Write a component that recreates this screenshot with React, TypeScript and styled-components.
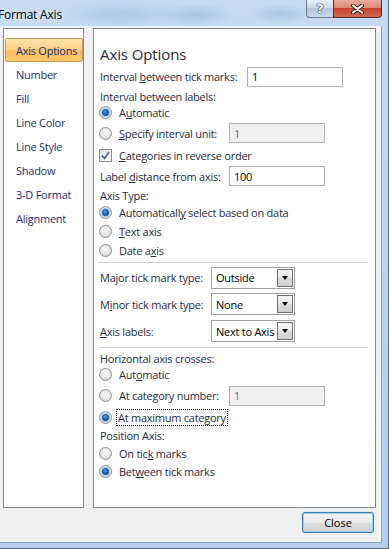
import React from 'react';
import styled, { createGlobalStyle } from 'styled-components';

const GlobalStyle = createGlobalStyle`
  html, body {
    margin: 0;
    padding: 0;
    background: #b7cfe9;
  }
  body {
    font-family: 'Open Sans', 'Liberation Sans', sans-serif;
    font-size: 11px;
    letter-spacing: -0.25px;
    color: #1f2a44;
  }
  * {
    box-sizing: border-box;
  }
`;

const Window = styled.div`
  width: 389px;
  height: 549px;
  display: flex;
  flex-direction: column;
  overflow: hidden;
  border-right: 1px solid #56697f;
  border-bottom: 1px solid #56697f;
  background:
    radial-gradient(ellipse 60px 14px at 120px 14px, rgba(150, 185, 220, 0.55), transparent),
    radial-gradient(ellipse 40px 12px at 195px 15px, rgba(140, 175, 215, 0.5), transparent),
    radial-gradient(ellipse 30px 10px at 280px 14px, rgba(140, 175, 215, 0.5), transparent),
    linear-gradient(180deg, #c6dbf1 0%, #bcd4ed 50%, #b5cee9 100%);
`;

const TitleBar = styled.div`
  height: 26px;
  flex: none;
  display: flex;
  align-items: flex-start;
  padding-right: 6px;
`;

const Title = styled.div`
  flex: 1;
  margin-left: -2px;
  padding-top: 6px;
  font-size: 12px;
  letter-spacing: -0.2px;
  color: #000;
  text-shadow: 0 0 6px rgba(255, 255, 255, 0.9);
`;

const CaptionButtons = styled.div`
  display: flex;
  height: 18px;
`;

const HelpButton = styled.div`
  width: 27px;
  height: 18px;
  border: 1px solid #6c7d91;
  border-top: none;
  border-right: none;
  border-bottom-left-radius: 4px;
  background: linear-gradient(180deg, #e6eef7 0%, #ccdae8 45%, #b4c6da 50%, #c7d7e6 100%);
  display: flex;
  align-items: center;
  justify-content: center;
  font: bold 13px 'DejaVu Sans', sans-serif;
  color: #f4f6f8;
  text-shadow: 0 0 1px #2b3440, 0 0 1px #2b3440, 0 0 1px #2b3440;
`;

const CloseCaption = styled.div`
  width: 49px;
  height: 18px;
  border: 1px solid #5a2b22;
  border-top: none;
  border-bottom-right-radius: 4px;
  background: linear-gradient(180deg, #e8aa9c 0%, #dc8a76 45%, #c7432e 50%, #cf6a4e 100%);
  display: flex;
  align-items: center;
  justify-content: center;
`;

const Client = styled.div`
  flex: 1;
  margin: 0 6px 5px 0;
  border-right: 1px solid #8aa0b8;
  border-bottom: 1px solid #8aa0b8;
  background: #f0f0f0;
  display: flex;
  flex-direction: column;
  padding: 2px 5px 0 3px;
`;

const Panes = styled.div`
  height: 480px;
  display: flex;
  gap: 9px;
`;

const Nav = styled.ul`
  width: 81px;
  margin: 0;
  padding: 9px 0 0 1px;
  list-style: none;
  background: #fff;
  border: 1px solid #828790;
`;

const NavItem = styled.li<{ $active?: boolean }>`
  height: 24px;
  display: flex;
  align-items: center;
  padding-left: ${(p) => (p.$active ? '10px' : '11px')};
  color: #1b2d78;
  border: ${(p) => (p.$active ? '1px solid #c8985a' : 'none')};
  border-radius: 2px;
  background: ${(p) =>
    p.$active
      ? 'radial-gradient(ellipse 60% 70% at 50% 100%, #ffc35e, transparent), linear-gradient(180deg, #fde3a8 0%, #fcd08a 45%, #fbbd62 55%, #fcca78 100%)'
      : 'transparent'};
`;

const Pane = styled.div`
  flex: 1;
  background: #fff;
  border: 1px solid #828790;
  padding: 13px 7px 0 5px;
  display: flex;
  flex-direction: column;
`;

const Heading = styled.div`
  height: 23px;
  display: flex;
  align-items: center;
  font-size: 15px;
  letter-spacing: -0.1px;
  padding-left: 1px;
`;

const Row = styled.div<{ $h: number }>`
  height: ${(p) => p.$h}px;
  flex: none;
  display: flex;
  align-items: center;
`;

const Label = styled.span<{ $w?: number }>`
  white-space: nowrap;
  padding-left: 1px;
  ${(p) => (p.$w ? `width: ${p.$w}px; flex: none;` : '')}
`;

const Key = styled.u`
  text-underline-offset: 1px;
`;

const Choice = styled.span<{ $w?: number }>`
  display: flex;
  align-items: center;
  gap: 7px;
  white-space: nowrap;
  ${(p) => (p.$w ? `width: ${p.$w}px; flex: none;` : '')}
`;

const RadioDot = styled.span<{ $on?: boolean }>`
  width: 13px;
  height: 13px;
  flex: none;
  border-radius: 50%;
  border: 1px solid #8e8f8f;
  background: radial-gradient(circle at 50% 40%, #fafafa 0%, #e4e4e4 55%, #cfcfcf 100%);
  display: flex;
  align-items: center;
  justify-content: center;

  &::after {
    content: '';
    display: ${(p) => (p.$on ? 'block' : 'none')};
    width: 7px;
    height: 7px;
    border-radius: 50%;
    background: radial-gradient(circle at 45% 40%, #59a3e8 0%, #1a63a8 45%, #0c3e72 100%);
    box-shadow: 0 0 1px 1px #9cc4ea;
  }
`;

const CheckBox = styled.span`
  width: 13px;
  height: 13px;
  flex: none;
  border: 1px solid #8e8f8f;
  background: linear-gradient(135deg, #d8d8d8 0%, #f2f2f2 60%, #ffffff 100%);
  display: flex;
  align-items: center;
  justify-content: center;
`;

const TextBox = styled.span<{ $disabled?: boolean }>`
  width: 96px;
  height: 20px;
  flex: none;
  display: flex;
  align-items: center;
  padding-left: 4px;
  border: 1px solid ${(p) => (p.$disabled ? '#adb2b5' : '#abadb3')};
  background: ${(p) => (p.$disabled ? '#f0f0f0' : '#fff')};
  color: ${(p) => (p.$disabled ? '#6d6d6d' : '#000')};
`;

const Combo = styled.span`
  width: 84px;
  height: 22px;
  flex: none;
  display: flex;
  align-items: center;
  border: 1px solid #a0a0a0;
  background: #fff;
  padding: 1px;
`;

const ComboValue = styled.span`
  flex: 1;
  padding-left: 3px;
  color: #000;
  white-space: nowrap;
  overflow: hidden;
`;

const ComboButton = styled.span`
  width: 16px;
  height: 100%;
  flex: none;
  border: 1px solid #707070;
  background: linear-gradient(180deg, #f4f4f4 0%, #ebebeb 50%, #dcdcdc 51%, #d0d0d0 100%);
  display: flex;
  align-items: center;
  justify-content: center;

  &::after {
    content: '';
    width: 0;
    height: 0;
    border-left: 3.5px solid transparent;
    border-right: 3.5px solid transparent;
    border-top: 4px solid #000;
  }
`;

const Separator = styled.div`
  height: 1px;
  flex: none;
  margin: 3px 0 2px -1px;
  background: #d3d3d3;
`;

const Focused = styled.span`
  border: 1px dotted #000;
  padding: 0 1px;
  margin-left: -3px;
  line-height: 15px;
`;

const Footer = styled.div`
  display: flex;
  justify-content: flex-end;
  padding: 4px 2px 0 0;
`;

const Button = styled.button`
  width: 72px;
  height: 21px;
  font: inherit;
  color: #000;
  border: 1px solid #3c7fb1;
  border-radius: 3px;
  background: linear-gradient(180deg, #f2f2f2 0%, #ebebeb 50%, #dddddd 51%, #cfcfcf 100%);
  box-shadow: inset 0 0 0 1px #8fd1f5, 0 0 1px #5fb4e6;
  padding: 0;
`;

const navItems = ['Number', 'Fill', 'Line Color', 'Line Style', 'Shadow', '3-D Format', 'Alignment'];

function Radio({ on, children, w }: { on?: boolean; children: React.ReactNode; w?: number }) {
  return (
    <Choice $w={w}>
      <RadioDot $on={on} />
      <span>{children}</span>
    </Choice>
  );
}

function Dropdown({ value }: { value: string }) {
  return (
    <Combo>
      <ComboValue>{value}</ComboValue>
      <ComboButton />
    </Combo>
  );
}

export default function App() {
  return (
    <>
      <GlobalStyle />
      <Window>
        <TitleBar>
          <Title>Format Axis</Title>
          <CaptionButtons>
            <HelpButton>?</HelpButton>
            <CloseCaption>
              <svg width="13" height="10" viewBox="0 0 13 10">
                <path d="M2 1.5 L11 8.5 M11 1.5 L2 8.5" stroke="#3a1a14" strokeWidth="4" strokeLinecap="round" />
                <path d="M2 1.5 L11 8.5 M11 1.5 L2 8.5" stroke="#fff" strokeWidth="2.2" strokeLinecap="round" />
              </svg>
            </CloseCaption>
          </CaptionButtons>
        </TitleBar>
        <Client>
          <Panes>
            <Nav>
              <NavItem $active>Axis Options</NavItem>
              {navItems.map((n) => (
                <NavItem key={n}>{n}</NavItem>
              ))}
            </Nav>
            <Pane>
              <Heading>Axis Options</Heading>
              <Row $h={23}>
                <Label $w={148}>
                  Interval <Key>b</Key>etween tick marks:
                </Label>
                <TextBox>1</TextBox>
              </Row>
              <Row $h={16}>
                <Label>Interval between labels:</Label>
              </Row>
              <Row $h={16}>
                <Radio on>
                  A<Key>u</Key>tomatic
                </Radio>
              </Row>
              <Row $h={26}>
                <Radio w={130}>
                  <Key>S</Key>pecify interval unit:
                </Radio>
                <TextBox $disabled>1</TextBox>
              </Row>
              <Row $h={19}>
                <Choice>
                  <CheckBox>
                    <svg width="9" height="9" viewBox="0 0 9 9">
                      <path d="M1 4.5 L3.5 7.5 L8 1" fill="none" stroke="#4a5e94" strokeWidth="1.6" />
                    </svg>
                  </CheckBox>
                  <span>
                    <Key>C</Key>ategories in reverse order
                  </span>
                </Choice>
              </Row>
              <Row $h={22}>
                <Label $w={130}>
                  Label <Key>d</Key>istance from axis:
                </Label>
                <TextBox>100</TextBox>
              </Row>
              <Row $h={16}>
                <Label>Axis Type:</Label>
              </Row>
              <Row $h={18}>
                <Radio on>
                  Automaticall<Key>y</Key> select based on data
                </Radio>
              </Row>
              <Row $h={20}>
                <Radio>
                  <Key>T</Key>ext axis
                </Radio>
              </Row>
              <Row $h={18}>
                <Radio>
                  Date a<Key>x</Key>is
                </Radio>
              </Row>
              <Separator />
              <Row $h={25}>
                <Label $w={112}>
                  Ma<Key>j</Key>or tick mark type:
                </Label>
                <Dropdown value="Outside" />
              </Row>
              <Row $h={28}>
                <Label $w={112}>
                  M<Key>i</Key>nor tick mark type:
                </Label>
                <Dropdown value="None" />
              </Row>
              <Row $h={26}>
                <Label $w={112}>
                  <Key>A</Key>xis labels:
                </Label>
                <Dropdown value="Next to Axis" />
              </Row>
              <Separator />
              <Row $h={16}>
                <Label>Horizontal axis crosses:</Label>
              </Row>
              <Row $h={16}>
                <Radio>
                  Aut<Key>o</Key>matic
                </Radio>
              </Row>
              <Row $h={27}>
                <Radio w={130}>
                  At cate<Key>g</Key>ory number:
                </Radio>
                <TextBox $disabled>1</TextBox>
              </Row>
              <Row $h={16}>
                <Radio on>
                  <Focused>
                    At maximum cate<Key>g</Key>ory
                  </Focused>
                </Radio>
              </Row>
              <Row $h={20}>
                <Label>Position Axis:</Label>
              </Row>
              <Row $h={16}>
                <Radio>
                  On tic<Key>k</Key> marks
                </Radio>
              </Row>
              <Row $h={20}>
                <Radio on>
                  Bet<Key>w</Key>een tick marks
                </Radio>
              </Row>
            </Pane>
          </Panes>
          <Footer>
            <Button>Close</Button>
          </Footer>
        </Client>
      </Window>
    </>
  );
}
